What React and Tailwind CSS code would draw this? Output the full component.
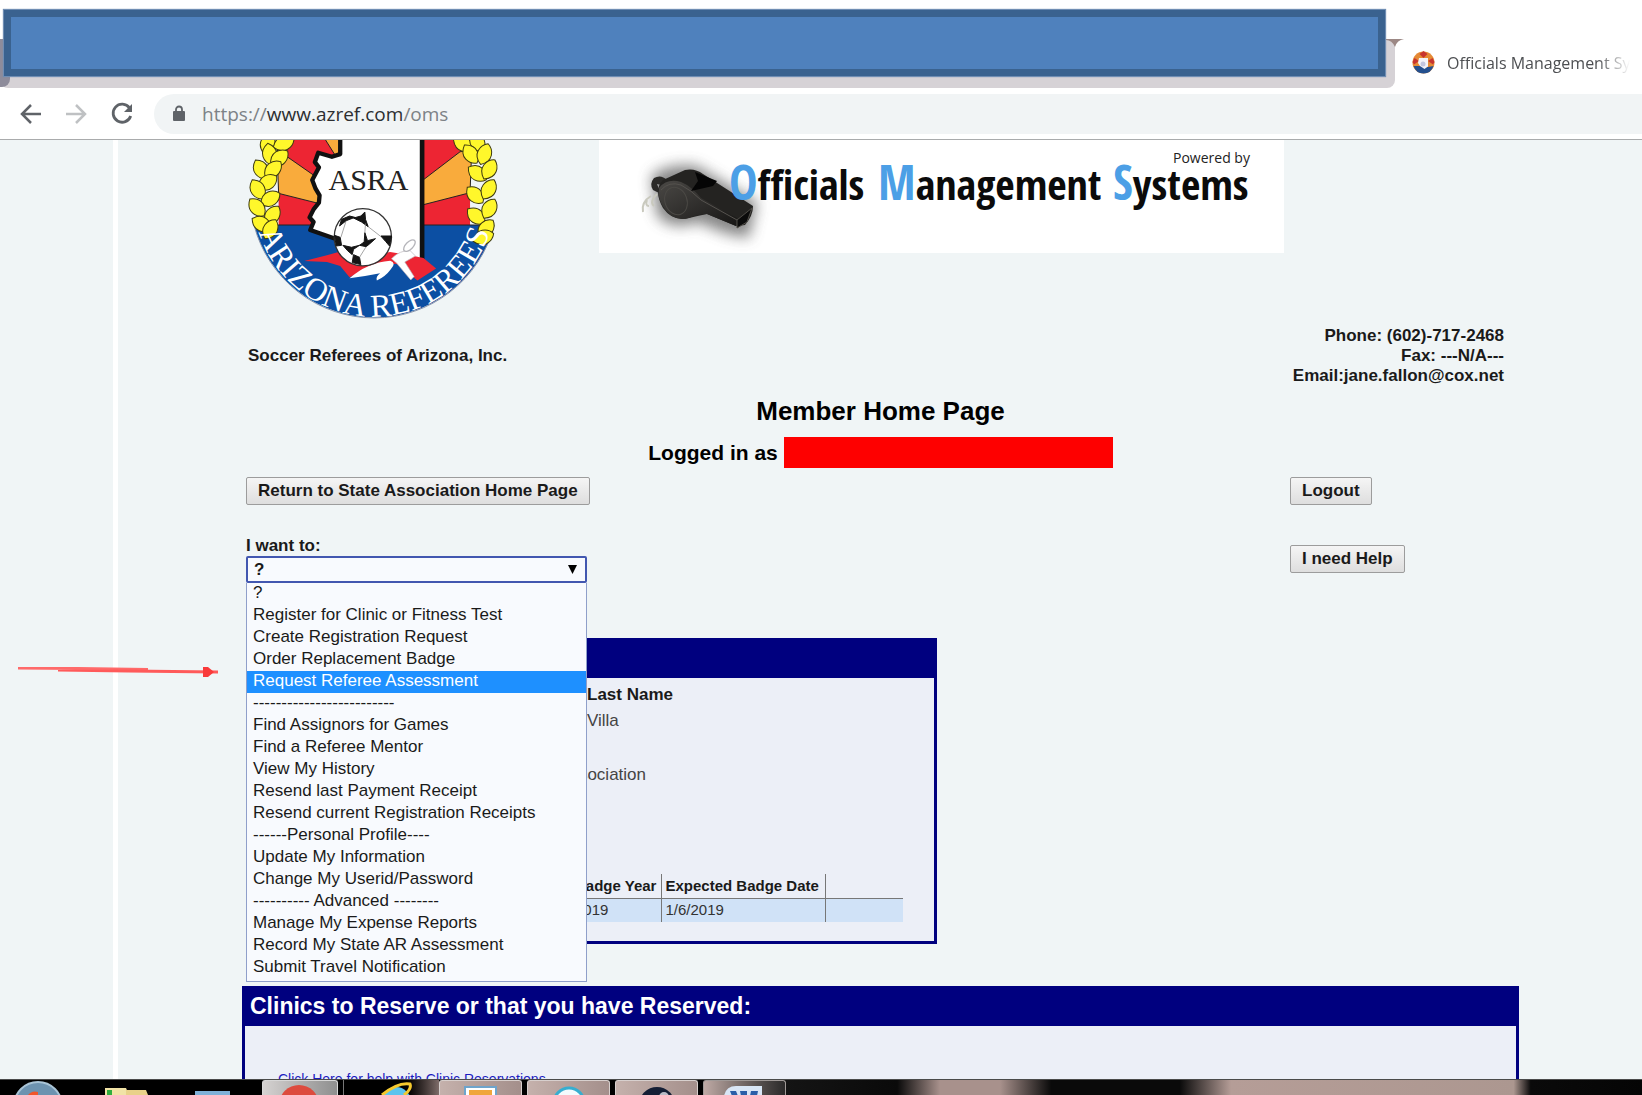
import { useState } from 'react'

const ACTIONS = [
  '?',
  'Register for Clinic or Fitness Test',
  'Create Registration Request',
  'Order Replacement Badge',
  'Request Referee Assessment',
  '-------------------------',
  'Find Assignors for Games',
  'Find a Referee Mentor',
  'View My History',
  'Resend last Payment Receipt',
  'Resend current Registration Receipts',
  '------Personal Profile----',
  'Update My Information',
  'Change My Userid/Password',
  '---------- Advanced --------',
  'Manage My Expense Reports',
  'Record My State AR Assessment',
  'Submit Travel Notification',
]

export default function App() {
  return (
    <div className="relative h-screen flex flex-col overflow-hidden bg-white font-['Liberation_Sans',Arial,sans-serif] text-[17px] leading-5 text-[#1a1a1a]">
      <TabStrip />
      <Toolbar />
      <main className="flex-1 min-h-0 overflow-hidden flex bg-[#f0f5f6]">
        <div className="w-[118px] shrink-0 border-r-[5px] border-white" />
        <div className="flex-1 min-w-0 pl-[124px] pr-[123px]">
          <MemberHome />
        </div>
      </main>
      <Taskbar />
      <PointerArrow />
    </div>
  )
}

/* Browser chrome */

function TabStrip() {
  return (
    <header className="relative h-[88px] shrink-0 flex items-end font-['Open_Sans','Noto_Sans',sans-serif]">
      <div className="w-[1395px] h-[49px] rounded-b-lg bg-[#d6d2d6]" />
      <svg className="absolute left-[1386px] top-[39px]" width="20" height="8" aria-hidden="true">
        <path d="M0 0H18Q11 1 9 8Q6 1 0 1Z" fill="#9c8885" />
      </svg>
      <div className="absolute left-0 top-[39px] w-[10px] h-[48px] rounded-br-lg bg-[#8e8c9b]" />
      <div className="absolute left-1 top-[10px] w-[1381px] h-[66px] border-[7px] border-[#3a628f] bg-[#4f81bd] shadow-[0_0_1px_1px_#6f8db3]" />
      <div className="flex-1 min-w-0 h-[51px] flex items-center pl-[17px] pr-3 gap-3">
        <Favicon />
        <span className="flex-1 overflow-hidden whitespace-nowrap text-base text-[#4d4f52] [mask-image:linear-gradient(to_right,black_82%,transparent)]">
          Officials Management Systems
        </span>
      </div>
    </header>
  )
}

function Favicon() {
  return (
    <svg width="23" height="23" viewBox="0 0 46 46" className="shrink-0" aria-hidden="true">
      <circle cx="23" cy="23" r="22" fill="#e58a35" />
      <path d="M23 0L15 6L23 14L31 6ZM5 14L14 20L4 27L1 22ZM41 14L32 20L42 27L45 22Z" fill="#c8352f" />
      <path d="M3 30Q8 45 23 45Q38 45 43 30L32 32L14 30Z" fill="#24508f" />
      <path d="M14 14H32V31L25 36L16 30L12 24Z" fill="#f3f3f8" />
      <circle cx="22" cy="26" r="5" fill="#c3c6df" />
    </svg>
  )
}

function Toolbar() {
  return (
    <nav className="h-[52px] shrink-0 flex items-center pl-[19px] border-b border-[#a9abac] bg-white text-[#5f6368]">
      <button aria-label="Back" className="w-6 h-6">
        <svg viewBox="0 0 24 24" fill="none" stroke="currentColor" strokeWidth="2.500"><path d="M22 12H4M12 3L3 12L12 21" /></svg>
      </button>
      <button aria-label="Forward" className="w-6 h-6 ml-[21px] text-[#bfc1c3]">
        <svg viewBox="0 0 24 24" fill="none" stroke="currentColor" strokeWidth="2.500"><path d="M2 12H20M12 3L21 12L12 21" /></svg>
      </button>
      <button aria-label="Reload" className="w-6 h-6 ml-[22px]">
        <svg viewBox="0 0 24 24" fill="none" stroke="currentColor" strokeWidth="2.800">
          <path d="M19.500 6A9 9 0 1 0 20.700 14" />
          <path d="M22 2V10H14Z" fill="currentColor" stroke="none" />
        </svg>
      </button>
      <div className="flex-1 min-w-0 h-10 ml-5 pl-[19px] flex items-center gap-[17px] rounded-l-full bg-[#f1f4f5]">
        <svg width="12" height="17" viewBox="0 0 12 17" aria-hidden="true">
          <path d="M3 7V4.500A3 3 0 0 1 9 4.500V7" fill="none" stroke="#5f6368" strokeWidth="1.800" />
          <rect x="0" y="6" width="12" height="10" rx="1" fill="#5f6368" />
        </svg>
        <div className="font-['Open_Sans','Noto_Sans',sans-serif] text-[19px] leading-6 text-[#7d8286]">
          https://<span className="text-[#2c2e30]">www.azref.com</span>/oms
        </div>
      </div>
    </nav>
  )
}

/* Page */

function MemberHome() {
  return (
    <>
      <div className="h-[186px] flex items-start pl-[5px]">
        <AsraLogo />
        <OmsBanner />
      </div>

      <div className="flex items-center justify-between pl-[6px] pr-[15px] font-bold">
        <div>Soccer Referees of Arizona, Inc.</div>
        <address className="not-italic text-right">
          Phone: (602)-717-2468<br />
          Fax: ---N/A---<br />
          Email:jane.fallon@cox.net
        </address>
      </div>

      <h1 className="mt-3 text-center font-bold text-[26px] leading-[26px] text-black">Member Home Page</h1>
      <h2 className="mt-[13px] flex items-center justify-center gap-[6px] font-bold text-[21px] leading-[30px] text-black">
        Logged in as <span className="w-[329px] h-[31px] bg-[#fe0000]" />
      </h2>

      <div className="mt-[9px] flex justify-between pl-1">
        <div>
          <PushButton>Return to State Association Home Page</PushButton>
          <ActionPicker />
        </div>
        <div className="w-[229px] flex flex-col items-start gap-10">
          <PushButton>Logout</PushButton>
          <PushButton>I need Help</PushButton>
        </div>
      </div>

      <MemberPanel />

      <section className="mt-[42px] border-[3px] border-[#00007f] bg-[#eceff7] h-[200px]">
        <h2 className="h-[37px] pl-[5px] bg-[#00007f] text-white font-bold text-[23px] leading-[35px]">
          Clinics to Reserve or that you have Reserved:
        </h2>
        <a href="#clinics" className="block mt-[43px] ml-[33px] text-[14px] text-[#1b1bc0] underline">
          Click Here for help with Clinic Reservations
        </a>
      </section>
    </>
  )
}

function PushButton({ children }) {
  return (
    <button className="h-7 px-[11px] border border-[#9c9c9c] rounded-[2px] bg-linear-to-b from-[#f5f5f5] to-[#dedede] font-bold whitespace-nowrap">
      {children}
    </button>
  )
}

function ActionPicker() {
  const [value, setValue] = useState('?')
  const [hovered, setHovered] = useState(4)

  return (
    <div className="mt-[31px] w-[341px]">
      <label htmlFor="action" className="block font-bold">I want to:</label>
      <div className="relative">
        <select
          id="action"
          value={value}
          onChange={e => setValue(e.target.value)}
          className="block w-full h-[27px] pl-[6px] appearance-none border-2 border-[#4257b0] rounded-[2px] bg-[#f8fafe] font-bold outline-none"
        >
          {ACTIONS.map(a => <option key={a}>{a}</option>)}
        </select>
        <svg className="absolute right-[10px] top-[9px]" width="9" height="9" aria-hidden="true">
          <path d="M0 0H9L4.500 9Z" fill="#000" />
        </svg>
        <ul role="listbox" className="absolute z-10 left-0 top-[27px] w-full pb-[2px] border border-t-0 border-[#8f9fca] bg-[#f8fafe]">
          {ACTIONS.map((a, i) => (
            <li
              key={a}
              role="option"
              aria-selected={i === hovered}
              onMouseEnter={() => setHovered(i)}
              onClick={() => setValue(a)}
              className={`h-[22px] pl-[6px] leading-5 ${i === hovered ? 'bg-[#1e90ff] text-white' : ''}`}
            >
              {a}
            </li>
          ))}
        </ul>
      </div>
    </div>
  )
}

function MemberPanel() {
  return (
    <section className="mt-[55px] ml-2 w-[687px] h-[306px] border-[3px] border-[#00007f] bg-[#eceff7]">
      <div className="h-[37px] bg-[#00007f]" />
      <div className="pt-1 pl-[334px] leading-[26px]">
        <div className="font-bold">Last Name</div>
        <div className="text-[#444]">Villa</div>
      </div>
      <p className="mt-7 w-[393px] text-right leading-[26px] text-[#444]">Association</p>
      <table className="mt-[86px] ml-[22px] w-[628px] table-fixed text-[15px] text-left whitespace-nowrap">
        <thead>
          <tr className="h-6 border-b border-[#777]">
            <th className="w-[296px]" />
            <th className="w-[90px] pl-1 border-r border-[#777]">Badge Year</th>
            <th className="w-[164px] pl-1 border-r border-[#777]">Expected Badge Date</th>
            <th />
          </tr>
        </thead>
        <tbody>
          <tr className="h-6 bg-[#d0e2f7] text-[#333]">
            <td />
            <td className="pl-1 border-r border-[#777]">2019</td>
            <td className="pl-1 border-r border-[#777]">1/6/2019</td>
            <td />
          </tr>
        </tbody>
      </table>
    </section>
  )
}

/* Drawings */

// [cx, cy, rotation] of each leaf
const LEAVES = [
  [112, 40, -70], [160, 40, -20], [118, 72, 80], [147, 84, -40], [92, 118, 60], [128, 118, -45],
  [112, 157, -35], [82, 178, 60], [120, 206, -30], [80, 232, 50], [126, 256, -55], [94, 282, 30], [120, 298, -60],
  [700, 42, 25], [742, 36, 60], [722, 72, 55], [763, 72, -70], [742, 130, 35], [778, 118, -60],
  [735, 195, 45], [776, 178, -60], [738, 258, 40], [778, 236, -60], [768, 296, -50], [760, 322, -20],
]

function AsraLogo() {
  return (
    <svg width="253" height="180" viewBox="50 30 760 540" className="shrink-0" role="img" aria-label="ASRA Arizona Referees">
      <defs>
        <clipPath id="seal"><circle cx="432" cy="190" r="373" /></clipPath>
        <path id="ring" d="M76 272A364 364 0 0 0 788 272" />
      </defs>
      <g clipPath="url(#seal)">
        <rect x="145" y="0" width="575" height="290" fill="#ed2533" />
        <g fill="#f9ab3c" stroke="#222" strokeWidth="3">
          <path d="M432 262L145 190L140 60L165 76Z" />
          <path d="M432 262L720 188L725 60L690 65Z" />
          <path d="M432 262L280 20L340 20Z" />
        </g>
        <rect x="50" y="285" width="770" height="290" fill="#0c4fa3" />
        <path d="M50 285H820" stroke="#222" strokeWidth="3" />
      </g>
      <path d="M71 285A373 373 0 0 0 793 285" fill="none" stroke="#8794ab" strokeWidth="3" />
      <path d="M330 20V72L305 80L264 68L254 96L266 112L246 150L268 196L262 228L238 262L248 284L240 300L330 332L400 400L575 400V20Z" fill="#fff" />
      <path d="M330 20V72L305 80L264 68L254 96L266 112L246 150L256 176L268 196L266 218L250 238L238 262L250 276L240 300L326 330" fill="none" stroke="#111" strokeWidth="13" strokeLinejoin="round" />
      <path d="M576 20V390" stroke="#111" strokeWidth="14" />
      {/* red ground, flag and glove */}
      <path d="M222 393L290 376L325 366L400 380L480 366L540 376L580 384L618 416L562 452L500 402L450 400L358 442L330 408L290 396Z" fill="#ed2533" />
      <path d="M358 445Q410 398 480 392Q500 398 482 418Q466 440 440 452Q436 440 450 430Q400 440 358 445Z" fill="#fff" />
      <path d="M484 386Q510 360 540 362L556 378L524 396L552 440L542 450L508 410L500 400Z" fill="#fff" stroke="#b9b4ba" strokeWidth="2" />
      <ellipse cx="538" cy="347" rx="22" ry="11" transform="rotate(-45 538 347)" fill="#fff" stroke="#b5b5ba" strokeWidth="4" />
      {/* ball */}
      <circle cx="398" cy="322" r="86" fill="#fff" stroke="#333" strokeWidth="4" />
      <g fill="#151515" stroke="#151515" strokeWidth="3" strokeLinejoin="round">
        <path d="M370 264L392 258L404 246L406 268L414 290L394 276Z" />
        <path d="M328 288L334 268L358 258L374 262L348 272Z" />
        <path d="M313 316L330 322L334 346L318 348Z" />
        <path d="M338 346L364 352L388 346L370 358L366 374L352 362Z" />
        <path d="M404 308L412 332L436 326L418 342L408 350L388 346L402 336Z" />
        <path d="M452 318L484 318L478 348L466 334Z" />
        <path d="M370 374L388 382L392 404L366 398Z" />
      </g>
      <path d="M414 290L450 318M348 272L332 322M408 350L388 382M404 308L406 280" fill="none" stroke="#777" strokeWidth="2" />
      <g fill="#fff72b" stroke="#3d3a10" strokeWidth="3">
        {LEAVES.map(([x, y, r]) => (
          <path key={`${x}-${y}`} d="M-33 0Q-18 -24 4 -21Q24 -18 33 0Q24 18 4 21Q-18 24 -33 0Z" transform={`translate(${x} ${y}) rotate(${r})`} />
        ))}
      </g>
      <text x="295" y="180" fontSize="90" fill="#222" className="font-['Liberation_Serif',serif]">ASRA</text>
      <text fontSize="96" fill="#fff" textAnchor="middle" className="font-['Liberation_Serif',serif]">
        <textPath href="#ring" startOffset="50%">ARIZONA REFEREES</textPath>
      </text>
    </svg>
  )
}

function OmsBanner() {
  return (
    <div className="ml-[99px] w-[685px] h-[113px] bg-white">
      <svg width="685" height="113" viewBox="0 0 685 113" role="img" aria-label="Officials Management Systems">
        <defs>
          <filter id="soft" x="-30%" y="-30%" width="160%" height="160%"><feGaussianBlur stdDeviation="7" /></filter>
          <linearGradient id="body" x1="0" y1="0" x2="1" y2="1">
            <stop offset="0" stopColor="#4a4845" />
            <stop offset="1" stopColor="#171615" />
          </linearGradient>
        </defs>
        <path d="M52 36Q70 22 98 26L158 62L150 98L128 94L98 82Q74 92 58 76Z" fill="#555" opacity="0.7" filter="url(#soft)" />
        <path d="M44 72Q42 62 52 56M50 66Q46 66 48 60M58 54Q50 62 55 66" fill="none" stroke="#c9c9be" strokeWidth="2" />
        <path d="M54 50Q50 44 55 38Q62 34 68 40L66 46L58 44L62 54Z" fill="#2b2a28" />
        <path d="M64 40L86 30Q96 28 104 34L154 66Q154 76 146 85L137 86L108 74Q98 76 90 78Q74 82 64 68Q54 50 64 40Z" fill="#242321" />
        <path d="M60 48Q68 38 82 42Q92 46 102 58L138 78L137 86L108 74Q98 74 90 78Q74 82 65 68Q58 58 60 48Z" fill="url(#body)" />
        <path d="M62 50Q70 41 82 45Q92 50 102 60L138 80" fill="none" stroke="#55524e" strokeWidth="1" />
        <ellipse cx="77" cy="61" rx="11" ry="14" fill="none" stroke="#4b4945" strokeWidth="1" transform="rotate(-20 77 61)" />
        <path d="M96 32L118 41L114 46L92 51L99 41Z" fill="#050505" />
        <path d="M138 80L153 68L148 82L138 88Z" fill="#0b0b0b" stroke="#4f4c47" strokeWidth="1" />
        <g className="font-['Open_Sans_Condensed','Open_Sans',sans-serif] font-bold" fontSize="42" fill="#0b0b0b">
          <text x="130" y="60"><tspan fontSize="48" fill="#4c9fe6">O</tspan>fficials</text>
          <text x="279" y="60"><tspan fontSize="48" fill="#4c9fe6">M</tspan>anagement</text>
          <text x="514" y="60"><tspan fontSize="48" fill="#4c9fe6">S</tspan>ystems</text>
        </g>
        <text x="574" y="23" fontSize="14" fill="#222" className="font-['Open_Sans','Noto_Sans',sans-serif]">Powered by</text>
      </svg>
    </div>
  )
}

function PointerArrow() {
  return (
    <svg className="absolute left-[18px] top-[660px]" width="202" height="20" aria-hidden="true">
      <path d="M0 7H60L130 8V10.500L60 10L0 9.500Z" fill="#ff6a6a" />
      <path d="M40 10L110 9.500L200 10.500V13.500L110 12.500L40 11.500Z" fill="#ff5a5a" />
      <path d="M185 7H190L196 12L190 17H185Z" fill="#f93a3a" />
    </svg>
  )
}

function Taskbar() {
  return (
    <footer className="h-4 shrink-0 flex border-t border-[#4a4a4a] bg-black overflow-hidden">
      <div className="w-[262px] shrink-0">
        <svg width="262" height="15" aria-hidden="true">
          <circle cx="38" cy="26" r="24" fill="#6d93b0" stroke="#a9c4d6" strokeWidth="2" />
          <path d="M28 15Q32 10 38 12V15Z" fill="#f0562b" />
          <path d="M105 15V8H126L129 15Z" fill="#f1e3a6" />
          <path d="M107 10H112V15H107Z" fill="#2fae3f" />
          <path d="M126 15V10H146L148 15Z" fill="#e9d189" />
          <path d="M195 15V11H230V15Z" fill="#7fb1d8" />
        </svg>
      </div>
      <button aria-label="Chrome" className="w-[76px] mr-[5px] shrink-0 overflow-hidden border border-b-0 rounded-t-[3px] border-[#d8d8d8] bg-linear-to-r from-[#d5d2d1] to-[#8f8f8f]">
        <svg width="74" height="15" aria-hidden="true"><circle cx="36" cy="24" r="20" fill="#dd4b3e" /></svg>
      </button>
      <div className="w-24 shrink-0 border-l border-[#777] bg-linear-to-r from-black from-60% to-[#7e6c69]">
        <svg width="90" height="15" aria-hidden="true">
          <circle cx="52" cy="22" r="15" fill="#5cc4ee" />
          <path d="M38 15Q54 2 66 4Q68 9 60 15" fill="none" stroke="#f5c92e" strokeWidth="3" />
        </svg>
      </div>
      <TaskButton label="Outlook">
        <path d="M25 15V6H56V15Z" fill="#fff" stroke="#6ea4cc" strokeWidth="2" />
        <path d="M29 15V9H52V15Z" fill="#f0a63c" />
      </TaskButton>
      <TaskButton label="Skype"><circle cx="41" cy="22" r="15" fill="#f4fbfd" stroke="#37aed0" strokeWidth="3" /></TaskButton>
      <TaskButton label="Steam">
        <circle cx="41" cy="24" r="18" fill="#141e35" />
        <circle cx="48" cy="16" r="5" fill="#b9bcc7" />
      </TaskButton>
      <button aria-label="Word" className="w-[83px] shrink-0 overflow-hidden border border-b-0 rounded-t-[3px] border-[#a09a98] bg-linear-to-r from-[#bfaaa5] to-[#2b2a2a]">
        <svg width="81" height="15" aria-hidden="true">
          <path d="M20 15Q22 5 32 5H58V15Z" fill="#d9e6f6" />
          <path d="M26 10H32L34 15H28ZM36 10H43V15H37ZM47 10H54L53 15H46Z" fill="#2a5ea8" />
        </svg>
      </button>
      <div className="flex-1 bg-[linear-gradient(90deg,#141414_0%,#0a0a0a_13%,#a8918c_18%,#a8918c_25%,#0a0a0a_31%,#0a0a0a_46%,#b59d97_52%,#ac9790_85%,#0a0a0a_87%,#050505_100%)]" />
    </footer>
  )
}

function TaskButton({ label, children }) {
  return (
    <button
      aria-label={label}
      className="w-[83px] mr-[5px] shrink-0 overflow-hidden border border-b-0 rounded-t-[3px] border-[#d8d0ce] bg-linear-to-r from-[#c5b1ac] to-[#a48f8b]"
    >
      <svg width="81" height="15" aria-hidden="true">{children}</svg>
    </button>
  )
}
